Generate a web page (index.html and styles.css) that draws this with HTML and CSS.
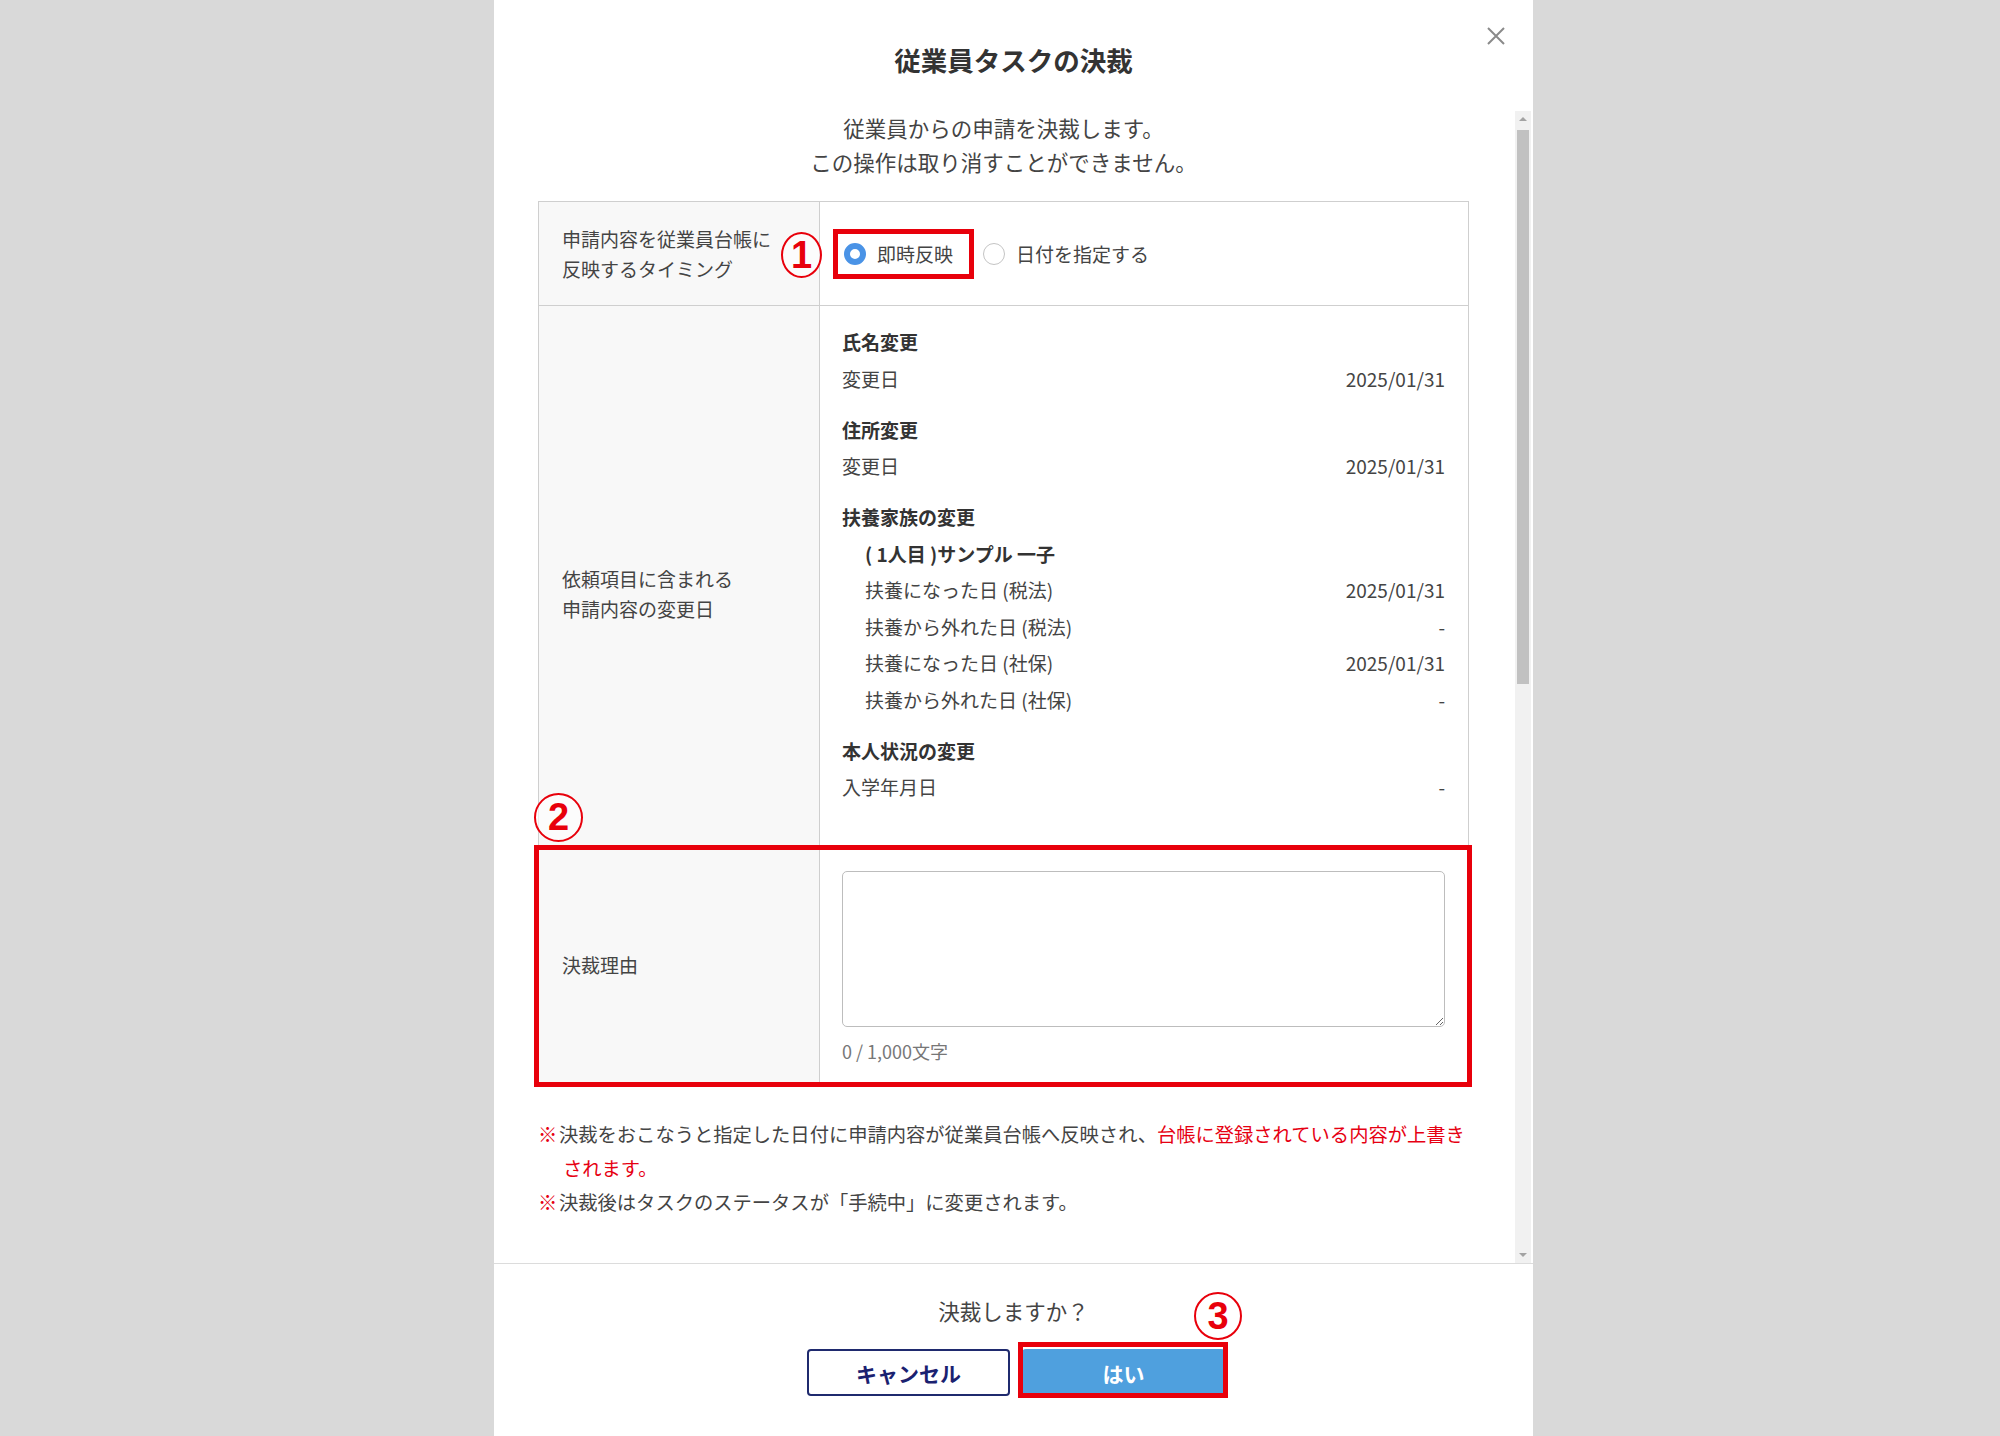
FILE: index.html
```html
<!DOCTYPE html>
<html lang="ja">
<head>
  <meta charset="UTF-8" />
  <title>従業員タスクの決裁</title>
  <link rel="stylesheet" href="styles.css">
</head>
<body>
  <div class="modal">
    <button class="close-btn" aria-label="閉じる">
      <svg width="20" height="20" viewBox="0 0 20 20"><path d="M2 2 L18 18 M18 2 L2 18" stroke="#8a8a8a" stroke-width="2" fill="none"/></svg>
    </button>
    <div class="modal-header">
      <h1>従業員タスクの決裁</h1>
    </div>

    <div class="modal-body">
      <div class="scroll-content">
        <p class="description">従業員からの申請を決裁します。<br>この操作は取り消すことができません。</p>

        <div class="form-table">
          <div class="form-row row-timing">
            <div class="form-label">申請内容を従業員台帳に<br>反映するタイミング</div>
            <div class="form-value radios">
              <label class="radio"><span class="radio-mark checked"></span>即時反映</label>
              <label class="radio"><span class="radio-mark"></span>日付を指定する</label>
            </div>
          </div>

          <div class="form-row">
            <div class="form-label label-changes">依頼項目に含まれる<br>申請内容の変更日</div>
            <div class="form-value changes">
              <div class="group">
                <div class="group-title">氏名変更</div>
                <div class="item"><span>変更日</span><span>2025/01/31</span></div>
              </div>
              <div class="group">
                <div class="group-title">住所変更</div>
                <div class="item"><span>変更日</span><span>2025/01/31</span></div>
              </div>
              <div class="group">
                <div class="group-title">扶養家族の変更</div>
                <div class="group-title sub">( 1人目 )サンプル 一子</div>
                <div class="item sub"><span>扶養になった日 (税法)</span><span>2025/01/31</span></div>
                <div class="item sub"><span>扶養から外れた日 (税法)</span><span>-</span></div>
                <div class="item sub"><span>扶養になった日 (社保)</span><span>2025/01/31</span></div>
                <div class="item sub"><span>扶養から外れた日 (社保)</span><span>-</span></div>
              </div>
              <div class="group">
                <div class="group-title">本人状況の変更</div>
                <div class="item"><span>入学年月日</span><span>-</span></div>
              </div>
            </div>
          </div>

          <div class="form-row">
            <div class="form-label">決裁理由</div>
            <div class="form-value reason">
              <textarea class="reason-input"></textarea>
              <div class="counter">0 / 1,000文字</div>
            </div>
          </div>

          <span class="mark-box box-1"></span>
          <span class="mark-num num-1">1</span>
          <span class="mark-box box-2"></span>
          <span class="mark-num num-2">2</span>
        </div>

        <ul class="notes">
          <li><span class="kome">※</span><span>決裁をおこなうと指定した日付に申請内容が従業員台帳へ反映され、<em>台帳に登録されている内容が上書き<br><span class="wrap-line">されます。</span></em></span></li>
          <li><span class="kome">※</span><span>決裁後はタスクのステータスが「手続中」に変更されます。</span></li>
        </ul>
      </div>

      <div class="scrollbar">
        <span class="arrow up"></span>
        <span class="thumb"></span>
        <span class="arrow down"></span>
      </div>
    </div>

    <div class="modal-footer">
      <p class="confirm">決裁しますか？</p>
      <div class="btn-group">
        <button class="cancel-btn">キャンセル</button>
        <div class="ok-wrap">
          <button class="ok-btn">はい</button>
          <span class="mark-box box-3"></span>
          <span class="mark-num num-3">3</span>
        </div>
      </div>
    </div>
  </div>
</body>
</html>
```

FILE: styles.css
```css
body {
    margin: 0;
    background-color: #d9d9d9;
    font-family: "Noto Sans CJK JP", "Noto Sans", sans-serif;
    color: #333;
}
.modal {
    position: relative;
    width: 1039px;
    height: 1436px;
    margin-left: 494px;
    background-color: #fff;
    display: flex;
    flex-direction: column;
}
.close-btn {
    position: absolute;
    top: 26px;
    left: 992px;
    width: 20px;
    height: 20px;
    padding: 0;
    border: none;
    background: none;
    cursor: pointer;
}
.close-btn svg {
    display: block;
}
.modal-header {
    height: 111px;
    box-sizing: border-box;
    padding-top: 42px;
    text-align: center;
}
.modal-header h1 {
    margin: 0;
    font-size: 26.5px;
    line-height: 36px;
    font-weight: bold;
    color: #333;
}
.modal-body {
    display: flex;
    height: 1152px;
    border-bottom: 1px solid #dcdcdc;
}
.scroll-content {
    flex: 1;
    overflow: hidden;
    padding: 0 46px 0 44px;
}
.description {
    margin: 0;
    text-align: center;
    font-size: 21.5px;
    line-height: 34px;
    color: #444;
}
.form-table {
    position: relative;
    margin-top: 22px;
    border: 1px solid #cfcfcf;
    border-bottom: none;
}
.form-row {
    display: grid;
    grid-template-columns: 281px 1fr;
    border-bottom: 1px solid #cfcfcf;
}
.form-label {
    display: flex;
    align-items: center;
    padding-left: 23px;
    background-color: #f8f8f8;
    border-right: 1px solid #cfcfcf;
    font-size: 19px;
    line-height: 30px;
    color: #444;
}
.label-changes {
    padding-top: 36px;
}
.form-value {
    padding: 0 23px 0 22px;
}
.row-timing {
    height: 103px;
}
.radios {
    display: flex;
    align-items: center;
    gap: 30px;
    padding-left: 24px;
}
.radio {
    display: flex;
    align-items: center;
    gap: 11px;
    font-size: 19px;
    color: #444;
}
.radio-mark {
    width: 22px;
    height: 22px;
    box-sizing: border-box;
    border-radius: 50%;
    border: 1px solid #c4c4c4;
    background-color: #fff;
}
.radio-mark.checked {
    border: 6px solid #4a93e6;
}
.changes {
    padding-top: 18px;
    padding-bottom: 26px;
    font-size: 19px;
    line-height: 36.5px;
    color: #444;
}
.group {
    margin-bottom: 14.5px;
}
.group-title {
    font-weight: bold;
    color: #333;
}
.item {
    display: flex;
    justify-content: space-between;
}
.sub {
    padding-left: 23px;
}
.reason {
    padding-top: 24px;
    padding-bottom: 17px;
}
.reason-input {
    display: block;
    width: 100%;
    height: 156px;
    box-sizing: border-box;
    border: 1px solid #bdbdbd;
    border-radius: 5px;
    resize: vertical;
    font-family: inherit;
}
.counter {
    margin-top: 10px;
    font-size: 18px;
    line-height: 28px;
    color: #777;
}
.notes {
    list-style: none;
    margin: 34px 0 0;
    padding: 0;
    font-size: 19.3px;
    line-height: 34px;
    color: #444;
}
.notes li {
    display: flex;
    white-space: nowrap;
}
.kome {
    width: 21px;
    flex: none;
    color: #e60012;
    font-weight: bold;
}
.notes em {
    font-style: normal;
    color: #e60012;
}
.wrap-line {
    padding-left: 4px;
}
.scrollbar {
    width: 16px;
    margin-right: 2px;
    background-color: #f1f1f1;
    display: flex;
    flex-direction: column;
    align-items: center;
}
.arrow {
    width: 0;
    height: 0;
    border-left: 4px solid transparent;
    border-right: 4px solid transparent;
}
.arrow.up {
    margin-top: 6px;
    border-bottom: 4px solid #a3a3a3;
}
.arrow.down {
    margin-top: auto;
    margin-bottom: 6px;
    border-top: 4px solid #a3a3a3;
}
.thumb {
    width: 12px;
    height: 554px;
    margin-top: 9px;
    background-color: #c1c1c1;
}
.modal-footer {
    padding-top: 32px;
    text-align: center;
}
.confirm {
    margin: 0;
    font-size: 21.5px;
    line-height: 30px;
    color: #444;
}
.btn-group {
    display: flex;
    justify-content: center;
    gap: 12px;
    margin-top: 23px;
    padding-left: 5px;
}
.cancel-btn, .ok-btn {
    width: 203px;
    height: 47px;
    font-family: inherit;
    font-size: 21px;
    font-weight: bold;
    border-radius: 4px;
    cursor: pointer;
}
.cancel-btn {
    background-color: #fff;
    border: 2px solid #1f2a6e;
    color: #1a2170;
}
.ok-btn {
    display: block;
    background-color: #4fa0de;
    border: none;
    color: #fff;
}
.ok-wrap {
    position: relative;
}
.mark-box {
    position: absolute;
    box-sizing: border-box;
    border: 5px solid #e8000b;
}
.mark-num {
    position: absolute;
    box-sizing: border-box;
    display: flex;
    align-items: center;
    justify-content: center;
    border: 2px solid #e8000b;
    border-radius: 50%;
    background-color: rgba(255, 255, 255, 0.6);
    color: #e8000b;
    font-family: "Liberation Sans", sans-serif;
    font-weight: bold;
    font-size: 38px;
}
.box-1 {
    left: 294px;
    top: 27px;
    width: 141px;
    height: 50px;
}
.num-1 {
    left: 242px;
    top: 30px;
    width: 41px;
    height: 46px;
}
.box-2 {
    left: -5px;
    top: 643px;
    width: 938px;
    height: 242px;
}
.num-2 {
    left: -5px;
    top: 591px;
    width: 49px;
    height: 49px;
}
.box-3 {
    left: -4px;
    top: -7px;
    width: 210px;
    height: 56px;
}
.num-3 {
    left: 172px;
    top: -57px;
    width: 48px;
    height: 48px;
}
```
